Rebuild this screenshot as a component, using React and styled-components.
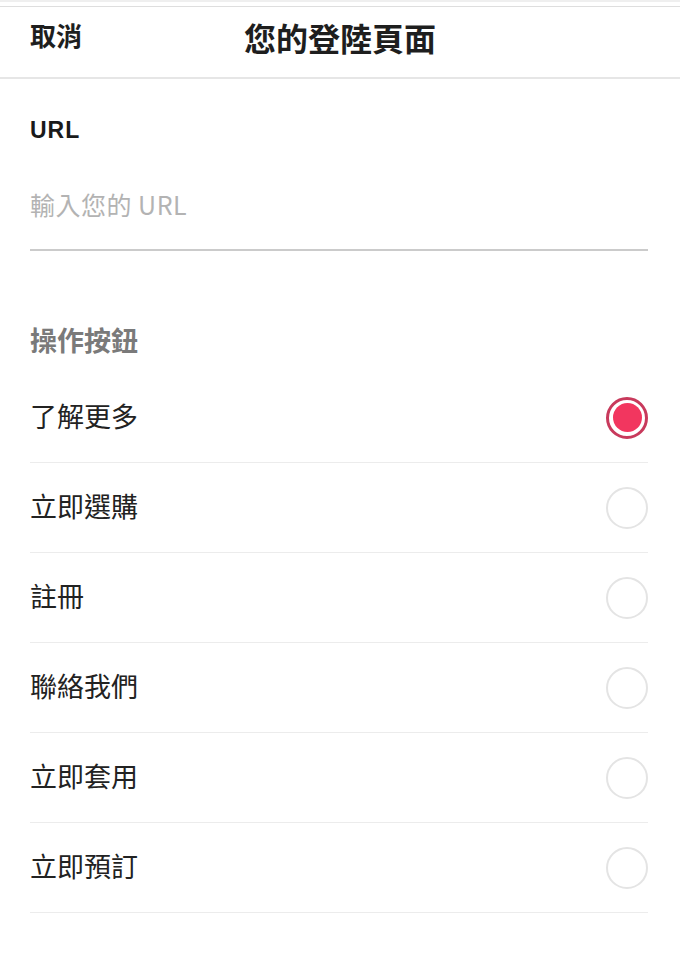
import React, { useState } from 'react';
import styled, { createGlobalStyle } from 'styled-components';

const GlobalStyle = createGlobalStyle`
  html, body {
    margin: 0;
    padding: 0;
    background: #ffffff;
  }
  body {
    font-family: "Noto Sans CJK TC", "Noto Sans", "Liberation Sans", sans-serif;
    color: #222222;
  }
`;

const OPTIONS = ['了解更多', '立即選購', '註冊', '聯絡我們', '立即套用', '立即預訂'];

const Page = () => {
  const [selected, setSelected] = useState(0);

  return (
    <Screen>
      <GlobalStyle />
      <TopStrip />
      <Header>
        <CancelButton>取消</CancelButton>
        <Title>您的登陸頁面</Title>
      </Header>
      <Content>
        <FieldLabel>URL</FieldLabel>
        <UrlInput placeholder="輸入您的 URL" />
        <SectionTitle>操作按鈕</SectionTitle>
        <OptionList>
          {OPTIONS.map((label, i) => (
            <OptionRow key={label} onClick={() => setSelected(i)}>
              <OptionLabel>{label}</OptionLabel>
              <Radio checked={selected === i}>
                {selected === i && <RadioDot />}
              </Radio>
            </OptionRow>
          ))}
        </OptionList>
      </Content>
    </Screen>
  );
};

const Screen = styled.div`
  width: 680px;
  min-height: 955px;
  background: #ffffff;
`;

const TopStrip = styled.div`
  height: 2px;
  background: #efefef;
  margin-bottom: 4px;
`;

const Header = styled.header`
  position: relative;
  height: 73px;
  border-top: 1px solid #dedede;
  border-bottom: 2px solid #e6e6e6;
  display: flex;
  align-items: flex-start;
  padding: 11px 30px 0;
  box-sizing: border-box;
`;

const CancelButton = styled.button`
  border: 0;
  background: none;
  padding: 0;
  font-family: inherit;
  font-size: 26px;
  font-weight: 700;
  line-height: 34px;
  color: #1e1e1e;
  cursor: pointer;
`;

const Title = styled.h1`
  position: absolute;
  left: 0;
  right: 0;
  top: 12px;
  margin: 0;
  text-align: center;
  font-size: 32px;
  font-weight: 700;
  line-height: 36px;
  color: #1e1e1e;
  pointer-events: none;
`;

const Content = styled.main`
  padding: 0 32px 0 30px;
`;

const FieldLabel = styled.div`
  margin-top: 36px;
  font-family: "Liberation Sans", "Noto Sans CJK TC", sans-serif;
  font-size: 23px;
  font-weight: 700;
  line-height: 30px;
  letter-spacing: 1px;
  color: #1a1a1a;
`;

const UrlInput = styled.input`
  display: block;
  width: 100%;
  box-sizing: border-box;
  margin: 0;
  padding: 44px 0 30px;
  border: 0;
  border-bottom: 2px solid #cbcbcb;
  outline: none;
  font-family: "Noto Sans CJK TC", "Noto Sans", sans-serif;
  font-size: 25px;
  letter-spacing: 0.5px;
  line-height: 30px;
  height: 106px;
  color: #222222;

  &::placeholder {
    color: #b3b3b3;
  }
`;

const SectionTitle = styled.div`
  margin-top: 74px;
  padding-bottom: 2px;
  font-size: 27px;
  font-weight: 700;
  line-height: 30px;
  color: #7a7a7a;
`;

const OptionList = styled.ul`
  list-style: none;
  margin: 16px 0 0;
  padding: 0;
`;

const OptionRow = styled.li`
  display: flex;
  align-items: center;
  justify-content: space-between;
  height: 90px;
  box-sizing: border-box;
  border-bottom: 1px solid #ececec;
  cursor: pointer;
`;

const OptionLabel = styled.span`
  font-size: 27px;
  line-height: 30px;
  padding-bottom: 4px;
  color: #222222;
`;

const Radio = styled.span`
  width: 42px;
  height: 42px;
  box-sizing: border-box;
  border-radius: 50%;
  border: ${(p) => (p.checked ? '3px solid #c83a5c' : '2px solid #e4e4e4')};
  display: flex;
  align-items: center;
  justify-content: center;
`;

const RadioDot = styled.span`
  width: 29px;
  height: 29px;
  border-radius: 50%;
  background: #f2365f;
`;

export default Page;
